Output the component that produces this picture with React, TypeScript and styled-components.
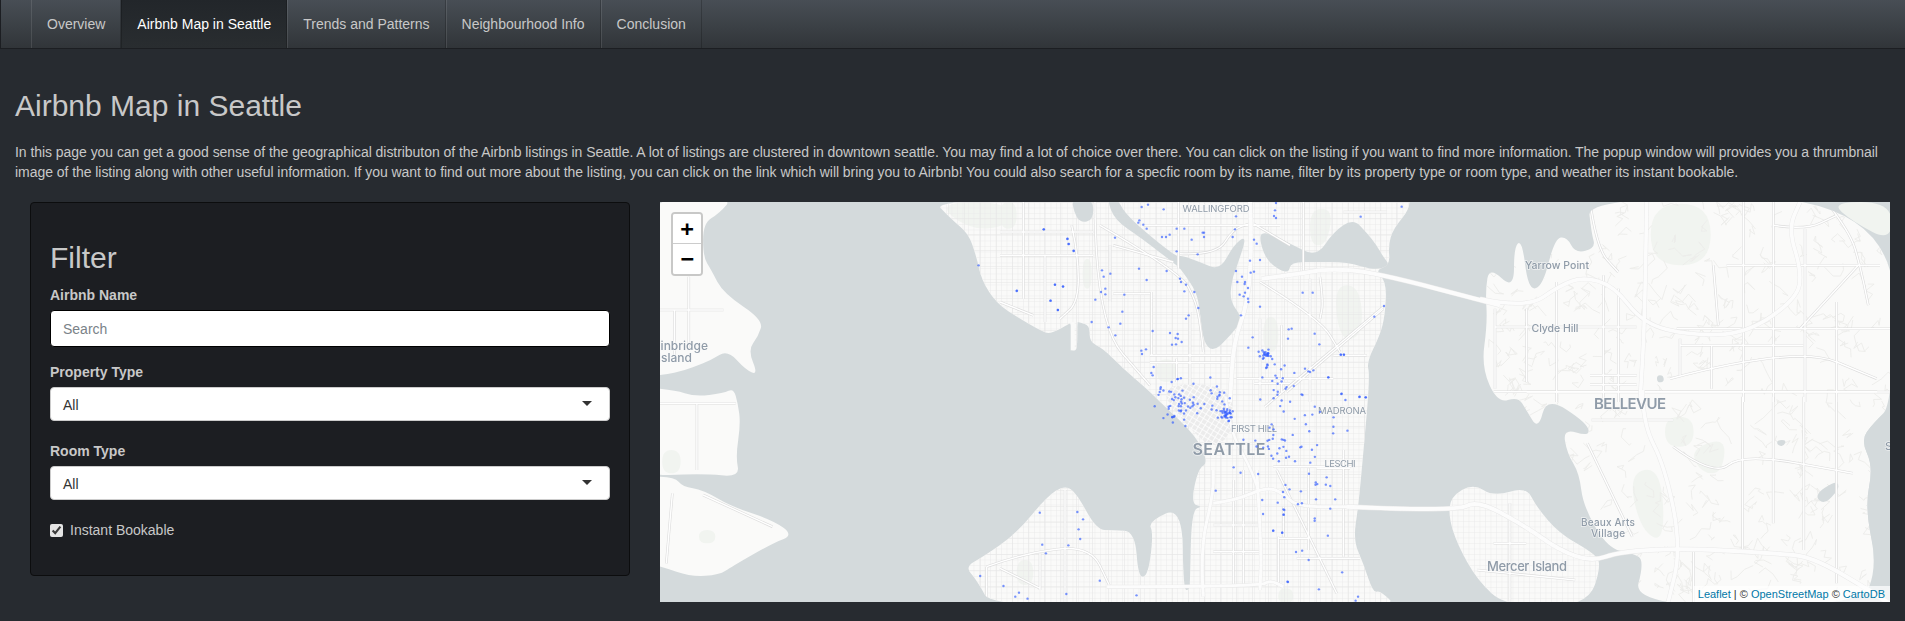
import React from 'react';
import styled, { createGlobalStyle } from 'styled-components';

const GlobalStyle = createGlobalStyle`
  html, body {
    margin: 0;
    background: #272b30;
    color: #c8c8c8;
    font-family: "Liberation Sans", Arial, sans-serif;
    font-size: 14px;
    line-height: 20px;
  }
  * { box-sizing: border-box; }
`;

const NavBar = styled.nav`
  display: flex;
  height: 49px;
  padding-left: 30px;
  border-left: 1px solid #1c1e22;
  border-bottom: 1px solid #1c1e22;
  background: linear-gradient(#484e55, #3a3f44 60%, #313539);
`;

const NavItem = styled.a<{ $active?: boolean }>`
  padding: 14px 15px;
  height: 48px;
  border-left: 1px solid ${(p) => (p.$active ? 'rgba(0, 0, 0, 0.2)' : 'rgba(255, 255, 255, 0.1)')};
  border-right: 1px solid rgba(0, 0, 0, 0.2);
  color: ${(p) => (p.$active ? '#ffffff' : '#c8c8c8')};
  background: ${(p) => (p.$active ? 'linear-gradient(#22262a, #292d30)' : 'transparent')};
`;

const Title = styled.h2`
  margin: 40px 15px 20px;
  font-size: 30px;
  font-weight: 500;
  line-height: 33px;
  color: #c8c8c8;
`;

const Intro = styled.p`
  margin: 0 15px 20px;
  letter-spacing: -0.05px;
`;

const Row = styled.div`
  display: grid;
  grid-template-columns: 600px 1fr;
  gap: 30px;
  padding: 0 15px 0 30px;
  align-items: start;
`;

const Panel = styled.form`
  height: 374px;
  padding: 19px;
  background: #1c1e22;
  border: 1px solid #0c0d0e;
  border-radius: 4px;
`;

const PanelTitle = styled.h2`
  margin: 19px 0 11px;
  font-size: 30px;
  font-weight: 500;
  line-height: 33px;
  color: #c8c8c8;
`;

const Field = styled.div<{ $gap: number }>`
  margin-bottom: ${(p) => p.$gap}px;
`;

const FieldLabel = styled.label`
  display: block;
  margin-bottom: 5px;
  font-weight: 700;
`;

const SearchInput = styled.input`
  display: block;
  width: 100%;
  height: 37px;
  padding: 8px 12px;
  border: 1px solid #000;
  border-radius: 4px;
  background: #fff;
  color: #272b30;
  font: 14px "Liberation Sans", Arial, sans-serif;
  &::placeholder { color: #7a8288; opacity: 1; }
`;

const SelectBox = styled.div`
  position: relative;
  height: 34px;
  padding: 7px 12px;
  border: 1px solid #cccccc;
  border-radius: 4px;
  background: #fff;
  color: #333333;
  &::after {
    content: '';
    position: absolute;
    right: 17px;
    top: 13px;
    border-style: solid;
    border-width: 5px 5px 0;
    border-color: #333333 transparent transparent;
  }
`;

const CheckRow = styled.label`
  display: flex;
  align-items: center;
  gap: 7px;
`;

const Check = styled.input`
  width: 13px;
  height: 13px;
  margin: 0;
  accent-color: #e4e4e4;
`;

const MapFrame = styled.div`
  position: relative;
  height: 400px;
  overflow: hidden;
  background: #d4dadc;
`;

const MapSvg = styled.svg`
  display: block;
  width: 100%;
  height: 100%;
  filter: blur(0.3px);
`;

const ZoomControl = styled.div`
  position: absolute;
  top: 10px;
  left: 11px;
  width: 32px;
  border: 2px solid rgba(0, 0, 0, 0.2);
  border-radius: 4px;
  background-clip: padding-box;
`;

const ZoomButton = styled.a<{ $top?: boolean }>`
  display: flex;
  align-items: center;
  justify-content: center;
  height: 30px;
  background: #fff;
  color: #000;
  font: 700 22px/30px "Lucida Console", "DejaVu Sans Mono", monospace;
  border-bottom: ${(p) => (p.$top ? '1px solid #ccc' : 'none')};
  border-radius: ${(p) => (p.$top ? '2px 2px 0 0' : '0 0 2px 2px')};
`;

const Attribution = styled.div`
  position: absolute;
  right: 0;
  bottom: 0;
  padding: 0 5px;
  background: rgba(255, 255, 255, 0.7);
  color: #333;
  font: 11px/16px "Liberation Sans", Arial, sans-serif;
  a { color: #0078a8; }
`;

type Pt = [number, number];

// map coords come from the crops: a/b squeezed ones, u/v/w true 3x ones
const a = (pts: number[][]): Pt[] => pts.map(([x, y]) => [x / 2.45 - 10, y / 3 - 12]);
const b = (pts: number[][]): Pt[] => pts.map(([x, y]) => [605 + x / 2.45, y / 3 - 12]);
const u = (pts: number[][]): Pt[] => pts.map(([x, y]) => [340 + x / 3, y / 3]);
const v = (pts: number[][]): Pt[] => pts.map(([x, y]) => [290 + x / 3, 248 + y / 3]);
const w = (pts: number[][]): Pt[] => pts.map(([x, y]) => [820 + x / 3, y / 3]);

const smooth = (pts: Pt[], closed = true) => {
  const f = (n: number) => n.toFixed(1);
  if (!closed) {
    if (pts.length === 2) return `M${f(pts[0][0])} ${f(pts[0][1])}L${f(pts[1][0])} ${f(pts[1][1])}`;
    let d = `M${f(pts[0][0])} ${f(pts[0][1])}`;
    for (let i = 1; i < pts.length - 1; i++) {
      const mx = (pts[i][0] + pts[i + 1][0]) / 2;
      const my = (pts[i][1] + pts[i + 1][1]) / 2;
      d += `Q${f(pts[i][0])} ${f(pts[i][1])} ${f(mx)} ${f(my)}`;
    }
    const last = pts[pts.length - 1];
    return `${d}L${f(last[0])} ${f(last[1])}`;
  }
  const n = pts.length;
  const mid = (i: number) => [(pts[i][0] + pts[(i + 1) % n][0]) / 2, (pts[i][1] + pts[(i + 1) % n][1]) / 2];
  const s = mid(n - 1);
  let d = `M${f(s[0])} ${f(s[1])}`;
  for (let i = 0; i < n; i++) {
    const m = mid(i);
    d += `Q${f(pts[i][0])} ${f(pts[i][1])} ${f(m[0])} ${f(m[1])}`;
  }
  return d + 'Z';
};

const bainbridge = a([[-40, 20], [205, 20], [170, 70], [130, 100], [130, 200], [150, 240], [180, 310], [278, 390], [265, 440], [240, 480], [265, 555], [235, 540], [190, 480], [150, 510], [110, 530], [60, 550], [-40, 565]]);
const bremerton = a([[-40, 590], [60, 600], [110, 620], [180, 610], [205, 595], [215, 640], [222, 700], [210, 800], [220, 862], [130, 850], [-40, 860]]);
const southIsland = a([[-40, 860], [60, 860], [80, 890], [130, 900], [200, 950], [300, 990], [352, 1035], [300, 1060], [200, 1130], [170, 1155], [100, 1160], [30, 1130], [-40, 1110]]);

const seattle: Pt[] = [
  ...a([[685, 20], [740, 90], [780, 130], [800, 200], [812, 270]]),
  ...u([[-10, 305], [60, 350], [120, 385], [150, 397], [200, 370], [215, 360], [216, 445], [219, 445], [232, 445], [232, 360], [235, 360], [270, 370], [268, 420], [310, 440], [370, 500], [440, 560], [480, 600]]),
  ...a([[1340, 740]]),
  ...v([[775, 40], [745, 55], [722, 162], [760, 170], [725, 178], [720, 395], [718, 420], [700, 420], [697, 168], [595, 215], [610, 250], [595, 375], [565, 385], [555, 245], [490, 240], [440, 240], [380, 130], [345, 105], [290, 140], [200, 250], [100, 320], [45, 350], [80, 390], [130, 480], [1350, 480], [1290, 420], [1270, 430], [1240, 340], [1210, 270], [1225, 170], [1240, 10]]),
  ...u([[1110, 520], [1100, 480], [1140, 400], [1155, 340], [1160, 240], [1125, 205], [1170, 190], [1165, 130], [1180, 80], [1230, 20], [1226, -20]]),
];

const mercer = b([[455, 920], [510, 880], [560, 920], [640, 890], [665, 950], [720, 1030], [800, 1085], [826, 1120], [790, 1250], [590, 1250], [520, 1170], [470, 1060], [450, 980]]);
const eastside = b([[790, 20], [800, 130], [810, 175], [760, 190], [740, 140], [710, 145], [680, 290], [645, 300], [630, 150], [610, 170], [610, 300], [550, 230], [540, 300], [545, 400], [530, 530], [570, 640], [620, 620], [640, 660], [670, 720], [690, 620], [790, 700], [795, 740], [730, 715], [740, 790], [770, 850], [780, 950], [840, 1075], [900, 1090], [930, 1110], [900, 1250], [1460, 1250], [1500, 1130], [1470, 950], [1490, 830], [1460, 750], [1490, 700], [1540, 640], [1540, 20]]);

const lakes = [
  u([[215, -10], [280, -10], [280, 55], [240, 62], [222, 30]]),
  // ship canal into Lake Union
  u([[320, -10], [352, -10], [372, 30], [430, 85], [530, 165], [545, 160], [600, 180], [660, 205], [700, 130], [742, 98], [712, 190], [695, 235], [690, 300], [730, 350], [692, 400], [640, 450], [610, 420], [600, 330], [590, 270], [545, 205], [530, 190], [420, 105], [345, 55]]),
  // Portage Bay, Union Bay
  u([[775, 100], [800, 90], [870, 125], [950, 165], [1000, 90], [1060, 50], [1100, 92], [1130, 130], [1150, 165], [1170, 190], [1125, 205], [1040, 180], [950, 180], [872, 180], [865, 218], [800, 180]]),
  b([[1510, 150], [1545, 150], [1545, 245], [1525, 200]]),
  b([[1545, 640], [1545, 1260], [1500, 1130], [1470, 950], [1490, 830], [1460, 750], [1490, 700]]),
  w([[530, 520], [550, 520], [552, 540], [532, 542]]),
  b([[1255, 750], [1278, 750], [1270, 770], [1255, 765]]),
  b([[1345, 915], [1400, 870], [1408, 895], [1370, 945]]),
];

const parks = [
  a([[700, 36], [880, 36], [880, 110], [780, 120]]),
  a([[30, 780], [75, 780], [75, 850], [30, 850]]),
  a([[120, 1020], [160, 1020], [160, 1060], [120, 1060]]),
  u([[0, 0], [50, 0], [50, 80], [0, 80]]),
  u([[248, 170], [275, 170], [275, 260], [248, 260]]),
  u([[470, 472], [528, 472], [528, 540], [470, 540]]),
  u([[1000, 250], [1080, 250], [1090, 400], [1020, 420]]),
  u([[790, 345], [835, 345], [835, 450], [790, 450]]),
  u([[930, 20], [1000, 20], [980, 130], [930, 130]]),
  v([[200, 330], [250, 330], [250, 405], [200, 405]]),
  v([[985, 415], [1030, 415], [1030, 460], [985, 460]]),
  w([[512, 5], [692, 5], [692, 190], [512, 190]]),
  w([[1050, 0], [1235, 0], [1235, 120], [1120, 60]]),
  b([[980, 680], [1050, 680], [1050, 770], [980, 770]]),
  b([[1040, 780], [1130, 740], [1120, 850], [1070, 850]]),
  b([[890, 850], [970, 830], [980, 1060], [920, 1020]]),
];

const highways: { pts: Pt[]; size: number }[] = [
  { pts: u([[785, 230], [900, 215], [985, 200], [1120, 210], [1500, 310]]), size: 4 },
  { pts: w([[0, 290], [140, 320], [240, 250], [310, 225], [400, 250], [490, 365], [630, 400], [800, 395], [950, 290], [965, 210], [925, 80], [960, 0]]), size: 3.6 },
  { pts: u([[750, -5], [755, 120], [745, 300], [700, 420], [690, 600]]), size: 4 },
  { pts: a([[1410, 620], [1420, 720], [1470, 830], [1490, 900]]), size: 2.6 },
  { pts: v([[920, 60], [935, 300], [930, 420]]), size: 3 },
  { pts: v([[760, 440], [750, 300], [790, 130], [790, 60]]), size: 3 },
  { pts: v([[790, 160], [860, 150], [950, 110], [1000, 130], [1040, 170], [1200, 170]]), size: 3 },
  { pts: v([[470, 410], [930, 410], [960, 390], [1000, 410]]), size: 3 },
  { pts: b([[200, 950], [470, 965], [520, 930], [640, 1010], [720, 1080], [800, 1115], [870, 1085], [1020, 1075], [1250, 1090], [1340, 1100], [1480, 1200], [1540, 1250]]), size: 4 },
  { pts: w([[500, -5], [495, 350], [480, 600]]), size: 3.6 },
  { pts: b([[925, 600], [925, 700], [980, 830], [1020, 1075], [985, 1250]]), size: 3.6 },
];

const arterials: Pt[][] = [
  // north Seattle
  u([[285, -5], [285, 360], [450, 550]]),
  u([[535, -5], [535, 200]]),
  u([[0, 90], [280, 90]]),
  u([[0, 160], [280, 160]]),
  u([[70, 0], [70, 290]]),
  u([[135, 160], [135, 360]]),
  u([[215, 70], [235, 160], [235, 300], [180, 350]]),
  u([[300, 70], [540, 210], [590, 300], [605, 400], [610, 450]]),
  u([[340, 130], [520, 180]]),
  u([[340, 275], [450, 275]]),
  u([[455, 270], [455, 460]]),
  u([[570, 330], [570, 550]]),
  u([[450, 460], [700, 460]]),
  u([[450, 482], [700, 482]]),
  u([[530, 470], [530, 540]]),
  u([[540, 155], [650, 160], [700, 80], [750, 65]]),
  u([[430, 70], [840, 70]]),
  u([[760, 65], [870, 130]]),
  u([[910, -5], [910, 215]]),
  u([[780, 240], [960, 350], [1020, 450]]),
  u([[960, 225], [970, 300], [960, 350]]),
  u([[1150, 320], [860, 570]]),
  u([[845, 370], [845, 570]]),
  u([[930, 230], [930, 600]]),
  u([[780, 350], [780, 600]]),
  u([[710, 530], [1000, 530]]),
  u([[1000, 460], [1100, 460]]),
  u([[1030, 30], [1160, 30]]),
  u([[330, 130], [330, 300]]),
  u([[0, 300], [100, 340]]),
  a([[1480, 580], [1568, 580]]),
  // West Seattle and the south end
  v([[345, 120], [345, 460]]),
  v([[110, 350], [220, 310], [420, 285], [480, 410]]),
  v([[110, 350], [110, 460]]),
  v([[270, 310], [270, 420]]),
  v([[150, 355], [270, 415]]),
  v([[850, 90], [850, 410]]),
  v([[980, 60], [1160, 430]]),
  v([[985, 260], [985, 410]]),
  v([[1075, 55], [1075, 300]]),
  v([[1000, 170], [1000, 260]]),
  v([[985, 265], [1075, 265]]),
  v([[1040, 325], [1230, 325]]),
  v([[1180, 0], [1180, 320]]),
  v([[1100, 55], [1200, 55]]),
  v([[880, 60], [880, 410]]),
  v([[790, 225], [930, 225]]),
  v([[790, 305], [930, 305]]),
  b([[0, 650], [290, 350]]),
  b([[20, 830], [220, 830]]),
  // Bellevue side
  w([[45, 320], [45, 560]]),
  w([[45, 375], [470, 375]]),
  w([[140, 320], [140, 540]]),
  w([[230, 240], [230, 600]]),
  w([[370, 220], [370, 600]]),
  w([[415, 260], [415, 600]]),
  w([[330, 0], [350, 140], [415, 210]]),
  w([[740, 190], [1200, 190]]),
  w([[790, 0], [790, 600]]),
  w([[880, 0], [880, 600]]),
  w([[975, 80], [975, 600]]),
  w([[1070, 300], [1070, 600]]),
  w([[590, 380], [1230, 380]]),
  w([[600, 410], [600, 520]]),
  w([[600, 430], [970, 430]]),
  w([[695, 430], [695, 560]]),
  w([[570, 530], [950, 430], [1190, 530]]),
  w([[140, 570], [1230, 570]]),
  w([[960, 380], [1135, 190]]),
  w([[1040, 0], [1110, 90], [1140, 190], [1165, 310]]),
  w([[880, 70], [975, 85], [1070, 40]]),
  w([[700, 190], [715, 370]]),
  w([[330, 520], [470, 520]]),
  w([[330, 548], [470, 548]]),
  b([[560, 605], [1500, 605]]),
  b([[800, 690], [1000, 690]]),
  b([[1000, 770], [1100, 860], [1170, 790], [1440, 850]]),
  b([[1170, 620], [1170, 1080]]),
  b([[1245, 620], [1245, 1000]]),
  b([[1320, 620], [1320, 1080]]),
  b([[1400, 620], [1400, 1180]]),
  b([[790, 760], [900, 1040]]),
  b([[1050, 1080], [1050, 1240]]),
  b([[560, 1060], [640, 1060]]),
  b([[600, 940], [600, 1235]]),
  b([[520, 1140], [760, 1170]]),
  // Bainbridge and the islands
  a([[24, 360], [180, 360]]),
  a([[95, 260], [95, 480]]),
  a([[60, 360], [60, 500]]),
  a([[24, 640], [210, 640]]),
  a([[115, 640], [115, 840]]),
  a([[55, 910], [40, 1120]]),
  a([[130, 915], [300, 1010]]),
];

const labels: { x: number; y: number; t: string; s: number; len?: number; weight?: number; anchor?: string }[] = [
  { x: 556, y: 9.5, t: 'WALLINGFORD', s: 9.5, len: 67, anchor: 'middle' },
  { x: 594, y: 229.5, t: 'FIRST HILL', s: 9.5, len: 46, anchor: 'middle' },
  { x: 569, y: 252.5, t: 'SEATTLE', s: 16, len: 73, weight: 600, anchor: 'middle' },
  { x: 682, y: 211.5, t: 'MADRONA', s: 9.5, len: 48, anchor: 'middle' },
  { x: 680, y: 264.5, t: 'LESCHI', s: 9.5, len: 31, anchor: 'middle' },
  { x: 897, y: 67, t: 'Yarrow Point', s: 10.5, len: 64, weight: 500, anchor: 'middle' },
  { x: 895, y: 130, t: 'Clyde Hill', s: 10.5, len: 47, weight: 500, anchor: 'middle' },
  { x: 970, y: 206.5, t: 'BELLEVUE', s: 15, len: 72, weight: 600, anchor: 'middle' },
  { x: 948, y: 324, t: 'Beaux Arts', s: 10, len: 54, weight: 500, anchor: 'middle' },
  { x: 948, y: 335, t: 'Village', s: 10, len: 34, weight: 500, anchor: 'middle' },
  { x: 867, y: 369, t: 'Mercer Island', s: 13, len: 80, weight: 500, anchor: 'middle' },
  { x: 48, y: 147.5, t: 'Bainbridge', s: 12, weight: 500, anchor: 'end' },
  { x: 32, y: 160, t: 'Island', s: 12, weight: 500, anchor: 'end' },
  { x: 1225, y: 248, t: 'Sammamish', s: 11, weight: 500 },
];

// listings and cul-de-sacs come from a small fixed generator
let seed = 4242;
const rnd = () => {
  seed = (seed * 16807) % 2147483647;
  return seed / 2147483647;
};
const gauss = () => (rnd() + rnd() + rnd() - 1.5) / 0.75;

const squiggles: string[] = [];
for (let i = 0; i < 420; i++) {
  let x = 830 + rnd() * 400;
  let y = rnd() * 400;
  let d = `M${x.toFixed(1)} ${y.toFixed(1)}`;
  for (let k = 0; k < 4; k++) {
    x += (rnd() - 0.5) * 18;
    y += (rnd() - 0.5) * 18;
    d += `L${x.toFixed(1)} ${y.toFixed(1)}`;
  }
  squiggles.push(d);
}

const clusters = [
  [520, 198, 18, 55], [567, 212, 4.5, 22], [560, 200, 14, 28], [606, 152, 4, 18], [615, 172, 18, 30],
  [642, 225, 22, 20], [610, 250, 22, 22], [640, 290, 20, 12],
];
const dots: Pt[] = [];
clusters.forEach(([cx, cy, sd, n]) => {
  for (let i = 0; i < n; i++) dots.push([cx + gauss() * sd, cy + gauss() * sd]);
});
dots.push(
  ...a([[805, 226], [899, 302], [992, 284], [1012, 290], [981, 332], [999, 360], [965, 118], [1023, 146], [1025, 162], [1038, 183],
    [955, 968], [1047, 966], [1061, 988], [1050, 1018], [1054, 1047], [961, 1064], [1025, 1066], [970, 1090], [809, 1158], [866, 1188], [904, 1208], [895, 1220], [925, 1226], [1020, 1212], [1102, 1172], [1192, 1216], [1386, 902], [1430, 832], [1490, 852], [1500, 930], [1502, 972], [1554, 960], [1552, 974], [1527, 1022], [1549, 1028], [1563, 1176]]),
  ...u([[131, 82], [202, 111], [207, 126], [221, 146], [50, 267], [165, 248], [189, 253], [152, 296], [174, 324], [345, 107], [306, 205], [311, 224], [331, 215], [316, 260], [303, 270], [316, 277], [286, 293], [373, 278], [367, 329], [361, 365], [326, 376], [275, 360], [346, 400], [417, 200], [440, 234], [500, 207], [540, 230], [543, 240], [553, 268], [558, 248], [583, 270], [595, 318], [566, 340], [558, 350], [458, 387], [510, 393], [533, 396], [527, 408], [534, 410], [545, 420], [516, 428], [528, 427], [424, 446], [438, 442], [426, 456], [461, 495], [454, 513], [458, 520], [415, 62], [430, 68], [440, 80], [418, 55], [425, 15], [444, 8], [491, 22], [486, 105], [498, 105], [509, 98], [530, 80], [553, 80], [575, 113], [608, 92], [612, 92], [612, 105], [593, 157], [530, 148], [708, 43], [705, 82], [698, 105], [762, 113], [770, 125], [750, 176], [780, 174], [708, 207], [752, 212], [762, 209], [726, 224], [735, 240], [734, 246], [712, 240], [744, 258], [719, 278], [735, 272], [731, 283], [744, 290], [745, 300], [780, 314], [723, 340], [758, 406], [745, 437], [825, 25], [822, 42], [828, 48], [828, 3], [1082, 44], [1205, 14], [908, 272], [938, 272], [1152, 312], [1123, 344], [875, 380], [866, 382], [864, 410], [944, 395], [958, 427], [1022, 458], [1032, 458], [915, 500], [925, 508], [930, 510], [940, 505], [985, 526], [1025, 575], [1078, 585], [1097, 586]]),
  ...b([[186, 494], [193, 494], [155, 562], [187, 612], [232, 620], [247, 622], [197, 630], [122, 650], [168, 682], [202, 722], [167, 730], [111, 818], [151, 862], [149, 884], [160, 888], [172, 928], [125, 928], [88, 904], [60, 898], [160, 956], [122, 985], [154, 1037], [76, 1086], [91, 1082], [107, 1110], [189, 1147], [132, 1198], [55, 1175], [228, 1220], [222, 1232], [45, 958], [46, 974], [20, 1022], [42, 1028]]),
);

const lands = [bainbridge, bremerton, southIsland, seattle, mercer, eastside];

function SeattleMap() {
  return (
    <MapSvg viewBox="0 0 1230 400" preserveAspectRatio="none">
      <defs>
        <pattern id="streets" width="5.5" height="5.5" patternUnits="userSpaceOnUse">
          <path d="M0 0H5.5M0 0V5.5" stroke="#ebebeb" strokeWidth="1" fill="none" />
        </pattern>
        <pattern id="blocks" width="16" height="16" patternUnits="userSpaceOnUse">
          <path d="M0 0H16M0 0V16" stroke="#e6e6e6" strokeWidth="1.2" fill="none" />
        </pattern>
        <pattern id="downtown" width="5" height="5" patternUnits="userSpaceOnUse" patternTransform="rotate(32)">
          <rect width="5" height="5" fill="#ececec" />
          <path d="M0 0H5M0 0V5" stroke="#ffffff" strokeWidth="1.6" fill="none" />
        </pattern>
        <clipPath id="land">
          {lands.map((land, i) => (
            <path key={i} d={smooth(land)} />
          ))}
        </clipPath>
        <clipPath id="eastLand">
          <path d={smooth(eastside)} />
        </clipPath>
      </defs>
      <rect width="1230" height="400" fill="#d4dadc" />
      {lands.map((land, i) => (
        <path key={i} d={smooth(land)} fill="#fafaf9" />
      ))}
      {parks.map((p, i) => (
        <path key={i} d={smooth(p)} fill="#f1f4f0" />
      ))}
      <path d={smooth(seattle)} fill="url(#streets)" />
      <path d={smooth(seattle)} fill="url(#blocks)" />
      <path d={smooth(mercer)} fill="url(#streets)" />
      <g clipPath="url(#eastLand)" fill="none" stroke="#ececea" strokeWidth="0.9">
        {squiggles.map((d, i) => (
          <path key={i} d={d} />
        ))}
      </g>
      <path d={smooth(a([[1230, 582], [1425, 582], [1432, 720], [1385, 775], [1340, 740]]))} fill="url(#downtown)" />
      {lakes.map((l, i) => (
        <path key={i} d={smooth(l)} fill="#d4dadc" />
      ))}
      <path d={`M${u([[218, 360]])[0].join(' ')}V${u([[218, 445]])[0][1]}`} stroke="#fafaf9" strokeWidth="4" />
      <g clipPath="url(#land)" fill="none">
        {arterials.map((r, i) => (
          <path key={i} d={smooth(r, false)} stroke="#dcdcdc" strokeWidth="2.6" />
        ))}
        {arterials.map((r, i) => (
          <path key={i} d={smooth(r, false)} stroke="#ffffff" strokeWidth="1.4" />
        ))}
      </g>
      {highways.map((r, i) => (
        <path key={i} d={smooth(r.pts, false)} fill="none" stroke="#e9e9e9" strokeWidth={r.size + 0.9} />
      ))}
      {highways.map((r, i) => (
        <path key={i} d={smooth(r.pts, false)} fill="none" stroke="#fcfcfc" strokeWidth={r.size} />
      ))}
      {labels.map((l) => (
        <text
          key={l.t}
          x={l.x}
          y={l.y}
          fontFamily='Inter, "Open Sans", sans-serif'
          fontSize={l.s}
          fontWeight={l.weight ?? 400}
          textLength={l.len}
          lengthAdjust="spacing"
          textAnchor={l.anchor ?? 'start'}
          fill="#8f9ba8"
          stroke="#fafafa"
          strokeWidth="1.5"
          strokeOpacity="0.7"
          paintOrder="stroke"
        >
          {l.t}
        </text>
      ))}
      {dots.map(([x, y], i) => (
        <circle key={i} cx={x} cy={y} r="1.2" fill="#2f5bff" fillOpacity="0.65" />
      ))}
    </MapSvg>
  );
}

export default function App() {
  return (
    <>
      <GlobalStyle />
      <NavBar>
        <NavItem>Overview</NavItem>
        <NavItem $active>Airbnb Map in Seattle</NavItem>
        <NavItem>Trends and Patterns</NavItem>
        <NavItem>Neighbourhood Info</NavItem>
        <NavItem>Conclusion</NavItem>
      </NavBar>
      <Title>Airbnb Map in Seattle</Title>
      <Intro>
        In this page you can get a good sense of the geographical distributon of the Airbnb listings in Seattle. A lot of listings are clustered in downtown seattle. You may find a lot of choice over there. You can click on the listing if you want to find more information. The popup window will provides you a thrumbnail image of the listing along with other useful information. If you want to find out more about the listing, you can click on the link which will bring you to Airbnb! You could also search for a specfic room by its name, filter by its property type or room type, and weather its instant bookable.
      </Intro>
      <Row>
        <Panel>
          <PanelTitle>Filter</PanelTitle>
          <Field $gap={15}>
            <FieldLabel>Airbnb Name</FieldLabel>
            <SearchInput placeholder="Search" />
          </Field>
          <Field $gap={20}>
            <FieldLabel>Property Type</FieldLabel>
            <SelectBox>All</SelectBox>
          </Field>
          <Field $gap={20}>
            <FieldLabel>Room Type</FieldLabel>
            <SelectBox>All</SelectBox>
          </Field>
          <CheckRow>
            <Check type="checkbox" defaultChecked />
            Instant Bookable
          </CheckRow>
        </Panel>
        <MapFrame>
          <SeattleMap />
          <ZoomControl>
            <ZoomButton $top>+</ZoomButton>
            <ZoomButton>−</ZoomButton>
          </ZoomControl>
          <Attribution>
            <a>Leaflet</a> | © <a>OpenStreetMap</a> © <a>CartoDB</a>
          </Attribution>
        </MapFrame>
      </Row>
    </>
  );
}
